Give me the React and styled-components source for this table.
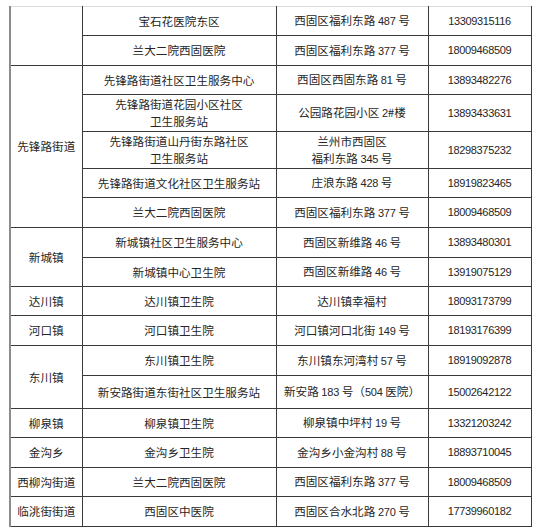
import styled, { createGlobalStyle } from "styled-components";

const Global = createGlobalStyle`
  html, body {
    margin: 0;
    padding: 0;
    background: #fff;
  }
  body {
    font-family: "Noto Sans CJK SC", "Noto Sans", sans-serif;
    color: #262626;
  }
`;

const Page = styled.div`
  padding: 6px 0 0 9px;
  width: 534px;
  box-sizing: border-box;
`;

const Table = styled.table`
  border-collapse: collapse;
  table-layout: fixed;
  width: 522px;
  border-left: 2px solid #8c8c8c;
  border-right: 1px solid #3a3a3a;
  border-bottom: 1px solid #3a3a3a;
  border-top: 1px solid #dcdcdc;
`;

const Row = styled.tr`
  height: ${(p) => p.h}px;
`;

const Cell = styled.td`
  padding: 0;
  border: 1px solid #3a3a3a;
  text-align: center;
  vertical-align: middle;
  font-size: 11.6px;
  line-height: 17px;
  white-space: nowrap;
  font-family: ${(p) =>
    p.phone
      ? '"Liberation Sans", "Noto Sans", sans-serif'
      : '"Noto Sans CJK SC", "Noto Sans", sans-serif'};
  letter-spacing: ${(p) => (p.phone ? "-0.35px" : "0")};
  font-size: ${(p) => (p.phone ? "11px" : "11.6px")};
  tr:first-child > & {
    border-top-color: #dcdcdc;
  }
`;

const Num = styled.span`
  font-family: "Liberation Sans", sans-serif;
  font-size: 11px;
  letter-spacing: -0.2px;
`;

const rows = [
  { h: 29, town: "", span: 2, org: "宝石花医院东区", addr: "西固区福利东路 487 号", tel: "13309315116" },
  { h: 30, org: "兰大二院西固医院", addr: "西固区福利东路 377 号", tel: "18009468509" },
  { h: 29, town: "先锋路街道", span: 5, org: "先锋路街道社区卫生服务中心", addr: "西固区西固东路 81 号", tel: "13893482276" },
  { h: 37, org: ["先锋路街道花园小区社区", "卫生服务站"], addr: "公园路花园小区 2#楼", tel: "13893433631" },
  { h: 37, org: ["先锋路街道山丹街东路社区", "卫生服务站"], addr: ["兰州市西固区", "福利东路 345 号"], tel: "18298375232" },
  { h: 29, org: "先锋路街道文化社区卫生服务站", addr: "庄浪东路 428 号", tel: "18919823465" },
  { h: 30, org: "兰大二院西固医院", addr: "西固区福利东路 377 号", tel: "18009468509" },
  { h: 30, town: "新城镇", span: 2, org: "新城镇社区卫生服务中心", addr: "西固区新维路 46 号", tel: "13893480301" },
  { h: 29, org: "新城镇中心卫生院", addr: "西固区新维路 46 号", tel: "13919075129" },
  { h: 29, town: "达川镇", span: 1, org: "达川镇卫生院", addr: "达川镇幸福村", tel: "18093173799" },
  { h: 30, town: "河口镇", span: 1, org: "河口镇卫生院", addr: "河口镇河口北街 149 号", tel: "18193176399" },
  { h: 30, town: "东川镇", span: 2, org: "东川镇卫生院", addr: "东川镇东河湾村 57 号", tel: "18919092878" },
  { h: 33, org: "新安路街道东街社区卫生服务站", addr: "新安路 183 号（504 医院）", tel: "15002642122" },
  { h: 29, town: "柳泉镇", span: 1, org: "柳泉镇卫生院", addr: "柳泉镇中坪村 19 号", tel: "13321203242" },
  { h: 30, town: "金沟乡", span: 1, org: "金沟乡卫生院", addr: "金沟乡小金沟村 88 号", tel: "18893710045" },
  { h: 29, town: "西柳沟街道", span: 1, org: "兰大二院西固医院", addr: "西固区福利东路 377 号", tel: "18009468509" },
  { h: 30, town: "临洮街街道", span: 1, org: "西固区中医院", addr: "西固区合水北路 270 号", tel: "17739960182" },
];

// split digits out so they get the narrower latin face
function mixed(text) {
  return text.split(/(\d+)/).map((part, i) =>
    /^\d+$/.test(part) ? <Num key={i}>{part}</Num> : part
  );
}

function lines(v) {
  if (Array.isArray(v)) {
    return v.map((l, i) => (
      <span key={i}>
        {i > 0 && <br />}
        {mixed(l)}
      </span>
    ));
  }
  return mixed(v);
}

export default function App() {
  return (
    <Page>
      <Global />
      <Table>
        <colgroup>
          <col style={{ width: 72 }} />
          <col style={{ width: 194 }} />
          <col style={{ width: 152 }} />
          <col style={{ width: 103 }} />
        </colgroup>
        <tbody>
          {rows.map((r, i) => (
            <Row key={i} h={r.h}>
              {r.town !== undefined && <Cell rowSpan={r.span}>{r.town}</Cell>}
              <Cell>{lines(r.org)}</Cell>
              <Cell>{lines(r.addr)}</Cell>
              <Cell phone>{r.tel}</Cell>
            </Row>
          ))}
        </tbody>
      </Table>
    </Page>
  );
}
